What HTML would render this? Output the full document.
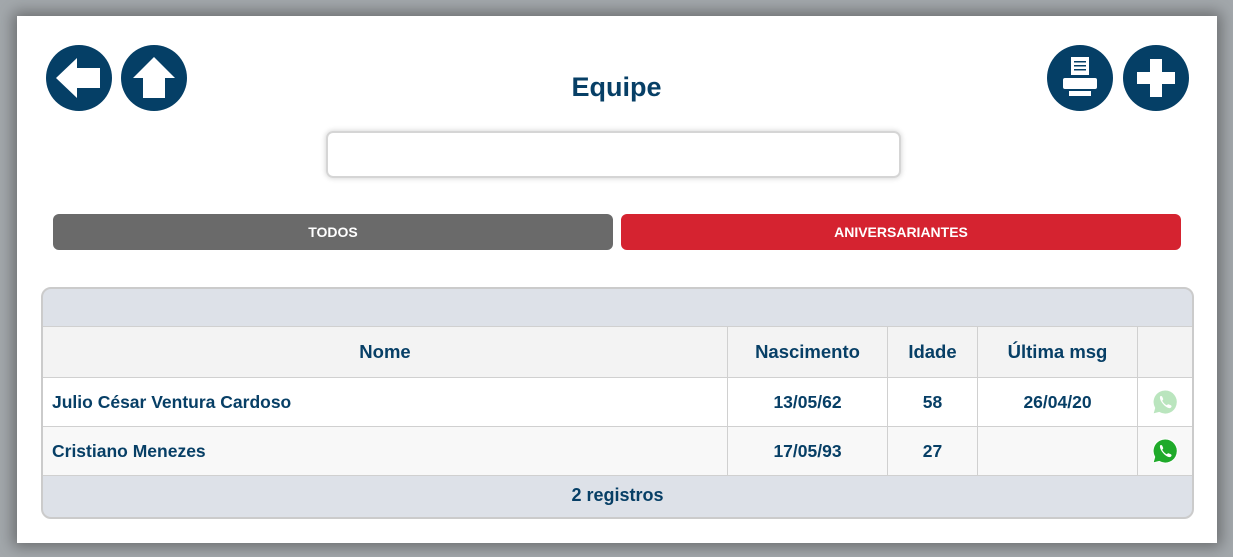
<!DOCTYPE html>
<html><head><meta charset="utf-8"><style>
*{box-sizing:border-box;margin:0;padding:0}
body{width:1233px;height:557px;background:#a3a8ac;font-family:"Liberation Sans",sans-serif;position:relative;overflow:hidden}
.panel{position:absolute;left:17px;top:16px;width:1200px;height:527px;background:#fff;box-shadow:0 0 14px 4px rgba(60,60,60,.55)}
.circ{position:absolute;top:45px;width:66px;height:66px;border-radius:50%;background:#053f66}
.circ svg{position:absolute;left:0;top:0}
h1{position:absolute;left:0;width:1233px;top:72px;text-align:center;font-size:27px;color:#073f66;font-weight:bold}
.search{position:absolute;left:326px;top:131px;width:575px;height:47px;border:2px solid #d5d5d5;border-radius:7px;box-shadow:0 0 6px rgba(0,0,0,.2)}
.btn{position:absolute;top:214px;height:36px;border-radius:6px;color:#fff;font-weight:bold;font-size:14px;text-align:center;line-height:36px}
.tbl{position:absolute;left:41px;top:287px;width:1153px;height:232px;border:2px solid #cbcbcb;border-radius:10px;overflow:hidden;background:#dde1e8}
table{position:absolute;left:-1px;top:37px;border-collapse:collapse;width:1151px}
td,th{border:1px solid #d0d0d0;color:#073f66;font-weight:bold;font-size:17.5px;text-align:center}
th{height:51px;background:#f3f3f3;font-size:18.5px}
td{height:49px}
tr.a td{background:#fff}tr.b td{background:#f8f8f8}
td.n{text-align:left;padding-left:9px}
.foot{position:absolute;left:0;top:186px;width:100%;text-align:center;font-size:18px;font-weight:bold;color:#073f66;line-height:40px}
</style></head><body>
<div class="panel"></div>
<div class="circ" style="left:46px"><svg width="66" height="66"><path d="M10 33 L31 13 L31 23 L54 23 L54 43 L31 43 L31 53 Z" fill="#fff"/></svg></div>
<div class="circ" style="left:121px"><svg width="66" height="66"><path d="M33 12 L54 33 L44 33 L44 53 L22 53 L22 33 L12 33 Z" fill="#fff"/></svg></div>
<div class="circ" style="left:1047px"><svg width="66" height="66"><rect x="24" y="12" width="18" height="18" fill="#fff"/><rect x="27" y="16" width="12" height="1.5" fill="#053f66"/><rect x="27" y="20" width="12" height="1.5" fill="#053f66"/><rect x="27" y="24" width="12" height="1.5" fill="#053f66"/><rect x="16" y="33" width="34" height="11" rx="2" fill="#fff"/><rect x="22" y="44" width="22" height="7" fill="#fff"/><rect x="22" y="44" width="22" height="2" fill="#053f66"/></svg></div>
<div class="circ" style="left:1123px"><svg width="66" height="66"><path d="M27 14 H39 V27 H52 V39 H39 V52 H27 V39 H14 V27 H27 Z" fill="#fff"/></svg></div>
<h1>Equipe</h1>
<div class="search"></div>
<div class="btn" style="left:53px;width:560px;background:#6a6a6a">TODOS</div>
<div class="btn" style="left:621px;width:560px;background:#d52330">ANIVERSARIANTES</div>
<div class="tbl">
<table>
<tr><th style="width:685px">Nome</th><th style="width:160px">Nascimento</th><th style="width:90px">Idade</th><th style="width:160px">Última msg</th><th></th></tr>
<tr class="a"><td class="n">Julio César Ventura Cardoso</td><td>13/05/62</td><td>58</td><td>26/04/20</td><td><svg width="28" height="28" viewBox="0 0 28 28" style="opacity:.3;vertical-align:middle"><path d="M14 2a12 12 0 0 0-10.3 18L2 26l6.3-1.6A12 12 0 1 0 14 2z" fill="#1faa2a" stroke="#fff" stroke-width="1"/><path d="M9 8.5c1-1 2-.5 2.4.5l.8 2c.2.6-.6 1.3-1 1.7 1 2 2.6 3.6 4.6 4.6.4-.4 1.1-1.2 1.7-1l2 .8c1 .4 1.5 1.4.5 2.4-3 3-12-6-11-11z" fill="#fff"/></svg></td></tr>
<tr class="b"><td class="n">Cristiano Menezes</td><td>17/05/93</td><td>27</td><td></td><td><svg width="28" height="28" viewBox="0 0 28 28" style="vertical-align:middle"><path d="M14 2a12 12 0 0 0-10.3 18L2 26l6.3-1.6A12 12 0 1 0 14 2z" fill="#1faa2a" stroke="#fff" stroke-width="1"/><path d="M9 8.5c1-1 2-.5 2.4.5l.8 2c.2.6-.6 1.3-1 1.7 1 2 2.6 3.6 4.6 4.6.4-.4 1.1-1.2 1.7-1l2 .8c1 .4 1.5 1.4.5 2.4-3 3-12-6-11-11z" fill="#fff"/></svg></td></tr>
</table>
<div class="foot">2 registros</div>
</div>
</body></html>
